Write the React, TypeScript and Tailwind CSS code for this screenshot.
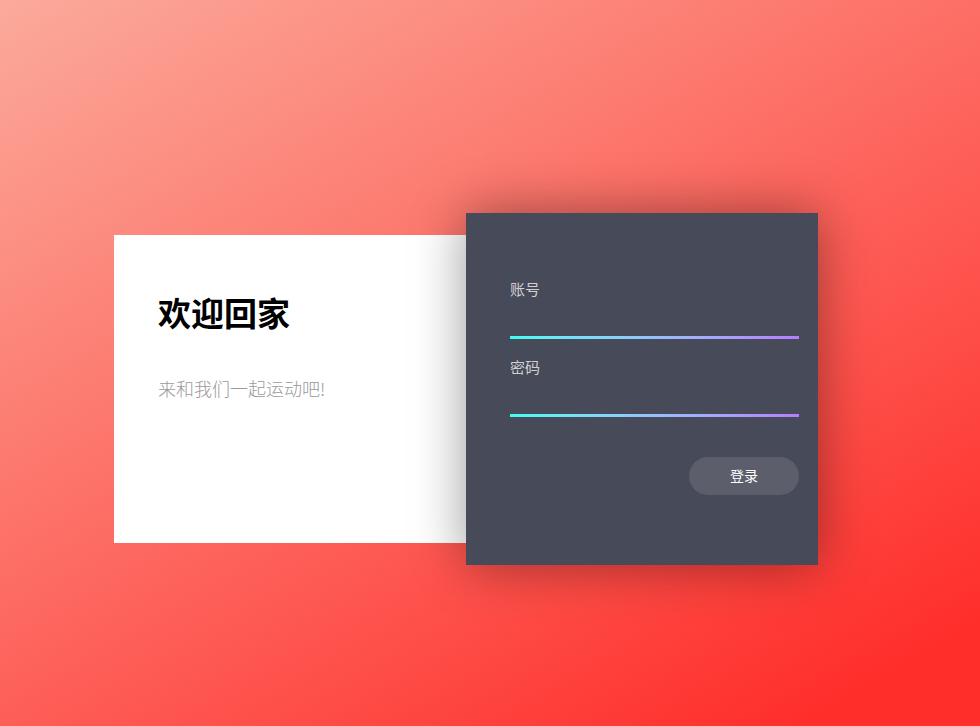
import { useState } from 'react'

const font = { fontFamily: '"Noto Sans CJK SC", "Noto Sans", sans-serif' }

function Field({ label, type }: { label: string; type: string }) {
  const [value, setValue] = useState('')
  return (
    <div className="flex flex-col">
      <label className="text-[15px] leading-[22px] text-[#cfd0d6]">{label}</label>
      <input
        type={type}
        value={value}
        onChange={(e) => setValue(e.target.value)}
        className="h-[36px] bg-transparent text-[15px] text-white outline-none"
      />
      <div className="h-[3px] bg-gradient-to-r from-[#3ffcf4] to-[#b47dff]" />
    </div>
  )
}

export default function App() {
  return (
    <div
      className="min-h-screen w-full bg-[linear-gradient(150deg,#fbaa9b_0%,#ff2e2b_92%)] pl-[114px] pt-[213px]"
      style={font}
    >
      <div className="flex items-center">
        <div className="h-[308px] w-[352px] bg-white pl-[44px] pt-[54px]">
          <h1 className="text-[33px] font-bold leading-[46px] text-black">欢迎回家</h1>
          <p className="mt-[40px] text-[18px] font-light leading-[26px] text-[#9a9a9a]">来和我们一起运动吧!</p>
        </div>
        <div className="h-[352px] w-[352px] bg-[#474a59] pl-[44px] pr-[19px] pt-[65px] shadow-[0_0_50px_rgba(0,0,0,0.4)]">
          <Field label="账号" type="text" />
          <div className="mt-[17px]">
            <Field label="密码" type="password" />
          </div>
          <div className="mt-[40px] flex justify-end">
            <button className="h-[38px] w-[110px] rounded-full bg-[#5c5e6b] pb-[2px] text-[14px] text-white">登录</button>
          </div>
        </div>
      </div>
    </div>
  )
}
